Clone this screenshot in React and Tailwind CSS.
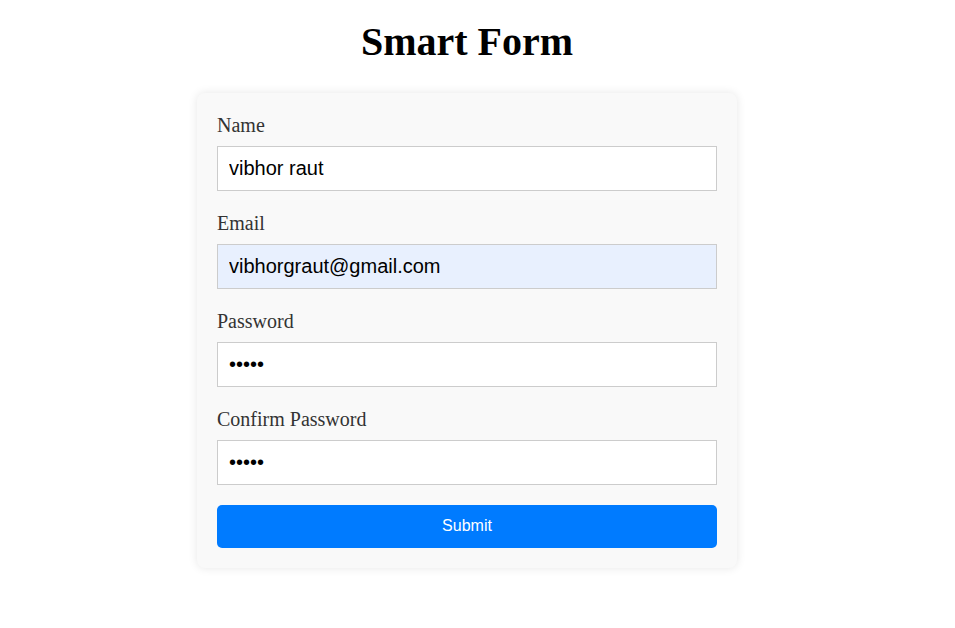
import React from "react";

export default function App() {
  const serif = { fontFamily: '"Liberation Serif", "Times New Roman", serif' };
  const inputCls =
    "block w-full h-[45px] border border-[#cccccc] px-[11px] text-[20px] text-black outline-none";
  const sans = { fontFamily: '"Liberation Sans", Arial, sans-serif' };
  const fields = [
    { label: "Name", type: "text", value: "vibhor raut", bg: "bg-white" },
    { label: "Email", type: "email", value: "vibhorgraut@gmail.com", bg: "bg-[#e8f0fe]" },
    { label: "Password", type: "password", value: "12345", bg: "bg-white" },
    { label: "Confirm Password", type: "password", value: "12345", bg: "bg-white" },
  ];
  return (
    <div className="w-[934px] min-h-[628px] bg-white" style={serif}>
      <h1 className="text-center text-[40px] font-bold leading-[46px] pt-[19px] pb-[28px] text-black">
        Smart Form
      </h1>
      <div className="mx-auto w-[540px] rounded-[8px] bg-[#f9f9f9] shadow-[0_0_10px_rgba(0,0,0,0.1)] px-[20px] pt-[20px] pb-[20px]">
        {fields.map((f) => (
          <div key={f.label} className="mb-[20px]">
            <label className="block text-[20px] leading-[23px] pt-px text-[#333333] mb-[9px]">
              {f.label}
            </label>
            <input
              type={f.type}
              readOnly
              value={f.value}
              className={`${inputCls} ${f.bg}`}
              style={sans}
            />
          </div>
        ))}
        <button
          className="block w-full h-[43px] rounded-[5px] bg-[#007bff] text-white text-[16px] pb-px"
          style={sans}
        >
          Submit
        </button>
      </div>
    </div>
  );
}
